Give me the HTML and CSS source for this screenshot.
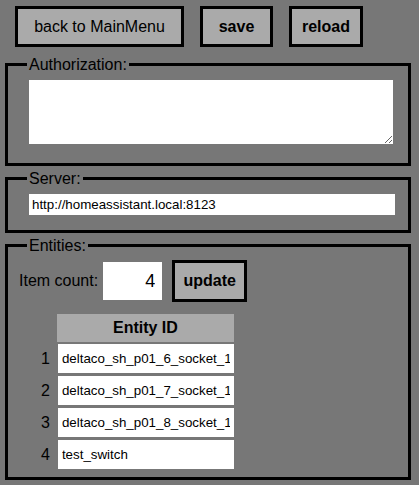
FILE: index.html
```html
<!DOCTYPE html>
<html>
<head>
<meta charset="utf-8">
<link rel="stylesheet" href="styles.css">
</head>
<body>
<div class="toolbar">
  <button class="btn btn-back">back to MainMenu</button>
  <button class="btn btn-save">save</button>
  <button class="btn btn-reload">reload</button>
</div>
<fieldset class="group">
  <legend class="group-title">Authorization:</legend>
  <textarea class="auth-text"></textarea>
</fieldset>
<fieldset class="group">
  <legend class="group-title">Server:</legend>
  <input class="server-input" type="text" value="http://homeassistant.local:8123">
</fieldset>
<fieldset class="group group-entities">
  <legend class="group-title">Entities:</legend>
  <div class="count-row">
    <label class="count-label">Item count:</label>
    <input class="count-input" type="number" value="4">
    <button class="btn btn-update">update</button>
  </div>
  <table class="entity-table">
    <thead>
      <tr><th class="num"></th><th class="head">Entity ID</th></tr>
    </thead>
    <tbody>
      <tr><td class="num">1</td><td class="cell"><input class="entity-input" type="text" value="deltaco_sh_p01_6_socket_1"></td></tr>
      <tr><td class="num">2</td><td class="cell"><input class="entity-input" type="text" value="deltaco_sh_p01_7_socket_1"></td></tr>
      <tr><td class="num">3</td><td class="cell"><input class="entity-input" type="text" value="deltaco_sh_p01_8_socket_1"></td></tr>
      <tr><td class="num">4</td><td class="cell"><input class="entity-input" type="text" value="test_switch"></td></tr>
    </tbody>
  </table>
</fieldset>
</body>
</html>
```

FILE: styles.css
```css
html, body {
  margin: 0;
  padding: 0;
  background: #777777;
}
body {
  font-family: "Liberation Sans", Arial, sans-serif;
  font-size: 16px;
  color: #000;
}
.toolbar {
  display: flex;
  gap: 16px;
  padding: 6px 0 0 15px;
}
.btn {
  box-sizing: border-box;
  height: 41px;
  padding: 0;
  background: #aaaaaa;
  border: 3px solid #000;
  border-radius: 0;
  font-family: "Liberation Sans", Arial, sans-serif;
  font-size: 16px;
  color: #000;
  line-height: 18px;
}
.btn-back { width: 169px; }
.btn-save { width: 73px; font-weight: bold; }
.btn-reload { width: 74px; font-weight: bold; }
.btn-update {
  width: 75px;
  height: 42px;
  font-weight: bold;
  margin-left: 10px;
}
.group {
  margin: 8px 8px 0 5px;
  padding: 0;
  border: 3px solid #000;
  min-width: 0;
}
.group + .group {
  margin-top: 3px;
}
.group-title {
  margin-left: 19px;
  padding: 0 2px;
  font-size: 16px;
  line-height: 19px;
  color: #000;
}
.auth-text {
  display: block;
  box-sizing: border-box;
  width: 364px;
  height: 64px;
  margin: 6px 0 19px 21px;
  border: none;
  padding: 2px 3px;
  background: #fff;
  font-family: "Liberation Sans", Arial, sans-serif;
  font-size: 13.33px;
  outline: none;
}
.server-input {
  display: block;
  box-sizing: border-box;
  width: 366px;
  height: 21px;
  margin: 6px 0 15px 21px;
  border: none;
  padding: 0 3px;
  background: #fff;
  font-family: "Liberation Sans", Arial, sans-serif;
  font-size: 13.33px;
  color: #000;
}
.count-row {
  display: flex;
  align-items: center;
  margin: 5px 0 0 11px;
}
.count-label {
  font-size: 16px;
  margin-right: 5px;
}
.count-input {
  box-sizing: border-box;
  width: 59px;
  height: 38px;
  border: none;
  padding: 0 7px 0 0;
  background: #fff;
  text-align: right;
  font-family: "Liberation Sans", Arial, sans-serif;
  font-size: 18px;
  color: #000;
  -moz-appearance: textfield;
}
.count-input::-webkit-inner-spin-button,
.count-input::-webkit-outer-spin-button {
  -webkit-appearance: none;
  margin: 0;
}
.entity-table {
  border-spacing: 2px;
  margin: 10px 0 5px 27px;
}
.num {
  padding: 0 5px 0 4px;
  text-align: right;
  font-size: 16px;
  font-weight: normal;
}
.head {
  box-sizing: border-box;
  width: 177px;
  padding: 5px 0;
  line-height: 18px;
  background: #aaaaaa;
  font-weight: bold;
  font-size: 16px;
}
.cell {
  padding: 0 0 1px 1px;
}
.entity-input {
  display: block;
  box-sizing: border-box;
  width: 176px;
  height: 29px;
  border: none;
  padding: 0 4px;
  background: #fff;
  font-family: "Liberation Sans", Arial, sans-serif;
  font-size: 13.33px;
  color: #000;
}
```
